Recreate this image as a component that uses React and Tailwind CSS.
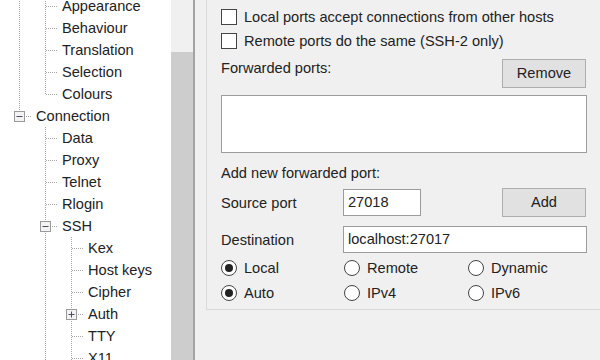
import React from "react";

const LINE = "#a6a6a6";

function Cell({ kind, box }) {
  return (
    <svg width="26" height="22" className="shrink-0 block">
      {kind === "v" && <line x1="13.5" y1="0" x2="13.5" y2="22" stroke={LINE} strokeDasharray="1 1" />}
      {kind === "tee" && (
        <>
          <line x1="13.5" y1="0" x2="13.5" y2="22" stroke={LINE} strokeDasharray="1 1" />
          <line x1="14" y1="11.5" x2="26" y2="11.5" stroke={LINE} strokeDasharray="1 1" />
        </>
      )}
      {kind === "ell" && (
        <>
          <line x1="13.5" y1="0" x2="13.5" y2="11" stroke={LINE} strokeDasharray="1 1" />
          <line x1="14" y1="11.5" x2="26" y2="11.5" stroke={LINE} strokeDasharray="1 1" />
        </>
      )}
      {box && (
        <>
          <rect x="8.5" y="6.5" width="10" height="10" fill="#f3f3f3" stroke="#9a9a9a" />
          <line x1="10.5" y1="11.5" x2="16.5" y2="11.5" stroke="#4a5060" />
          {box === "plus" && <line x1="13.5" y1="8.5" x2="13.5" y2="14.5" stroke="#4a5060" />}
        </>
      )}
    </svg>
  );
}

const rows = [
  { t: "Appearance", c: [["v"], ["tee"]] },
  { t: "Behaviour", c: [["v"], ["tee"]] },
  { t: "Translation", c: [["v"], ["tee"]] },
  { t: "Selection", c: [["v"], ["tee"]] },
  { t: "Colours", c: [["v"], ["ell"]] },
  { t: "Connection", c: [["ell", "minus"]] },
  { t: "Data", c: [[""], ["tee"]] },
  { t: "Proxy", c: [[""], ["tee"]] },
  { t: "Telnet", c: [[""], ["tee"]] },
  { t: "Rlogin", c: [[""], ["tee"]] },
  { t: "SSH", c: [[""], ["tee", "minus"]] },
  { t: "Kex", c: [[""], ["v"], ["tee"]] },
  { t: "Host keys", c: [[""], ["v"], ["tee"]] },
  { t: "Cipher", c: [[""], ["v"], ["tee"]] },
  { t: "Auth", c: [[""], ["v"], ["tee", "plus"]] },
  { t: "TTY", c: [[""], ["v"], ["tee"]] },
  { t: "X11", c: [[""], ["v"], ["tee"]] },
];

function Checkbox({ label }) {
  return (
    <div className="flex items-center h-4">
      <div className="w-4 h-4 border border-[#444] bg-white shrink-0" />
      <span className="ml-[7px] leading-4 whitespace-nowrap">{label}</span>
    </div>
  );
}

function Radio({ label, checked, w }) {
  return (
    <div className={`flex items-center ${w}`}>
      <div className="w-4 h-4 rounded-full border border-[#444] bg-white shrink-0 flex items-center justify-center">
        {checked && <div className="w-2 h-2 rounded-full bg-[#222]" />}
      </div>
      <span className="ml-[7px] leading-[18px]">{label}</span>
    </div>
  );
}

export default function App() {
  return (
    <div className="w-[600px] h-[360px] overflow-hidden bg-[#f0f0f0] flex font-['Liberation_Sans',Arial,sans-serif] text-[14.6px] text-[#222]">
      <div className="flex w-[195px] shrink-0 h-full border-r-2 border-[#a3a3a3]">
        <div className="w-[171px] bg-white h-full overflow-hidden">
          <div className="-mt-[5px] pl-[6px] flex flex-col">
            {rows.map((r) => (
              <div key={r.t} className="flex items-center h-[22px]">
                {r.c.map(([k, b], i) => (
                  <Cell key={i} kind={k} box={b} />
                ))}
                <span className="ml-[4px] leading-[22px] whitespace-nowrap">{r.t}</span>
              </div>
            ))}
          </div>
        </div>
        <div className="w-[22px] h-full flex flex-col">
          <div className="h-[52px] bg-[#f0f0f0]" />
          <div className="flex-1 bg-[#cdcdcd]" />
        </div>
      </div>
      <div className="pl-[11px]">
        <div className="w-[400px] h-[310px] border-l border-b border-[#dadada] pl-[14px] pt-[9px]">
          <div className="w-[366px] flex flex-col">
            <Checkbox label="Local ports accept connections from other hosts" />
            <div className="mt-[8px]">
              <Checkbox label="Remote ports do the same (SSH-2 only)" />
            </div>
            <div className="mt-[10px] flex items-start justify-between">
              <span className="leading-[18px]">Forwarded ports:</span>
              <button className="w-[84px] h-[29px] bg-[#e1e1e1] border border-[#adadad] text-[14.6px] mr-[1px]">Remove</button>
            </div>
            <div className="mt-[7px] h-[58px] bg-white border border-[#9c9c9c]" />
            <div className="mt-[11px] leading-[18px]">Add new forwarded port:</div>
            <div className="mt-[6px] flex items-center h-[29px]">
              <span className="w-[122px] leading-[18px]">Source port</span>
              <div className="w-[78px] h-[27px] bg-white border border-[#9c9c9c] flex items-center pl-[4px]">27018</div>
              <div className="flex-1" />
              <button className="w-[84px] h-[29px] bg-[#e1e1e1] border border-[#adadad] text-[14.6px] mr-[1px]">Add</button>
            </div>
            <div className="mt-[9px] flex items-center h-[27px]">
              <span className="w-[122px] leading-[18px]">Destination</span>
              <div className="flex-1 h-[27px] bg-white border border-[#9c9c9c] flex items-center pl-[4px]">localhost:27017</div>
            </div>
            <div className="mt-[6px] flex h-[18px]">
              <Radio label="Local" checked w="w-[123px]" />
              <Radio label="Remote" w="w-[124px]" />
              <Radio label="Dynamic" w="w-[100px]" />
            </div>
            <div className="mt-[7px] flex h-[18px]">
              <Radio label="Auto" checked w="w-[123px]" />
              <Radio label="IPv4" w="w-[124px]" />
              <Radio label="IPv6" w="w-[100px]" />
            </div>
          </div>
        </div>
      </div>
    </div>
  );
}
